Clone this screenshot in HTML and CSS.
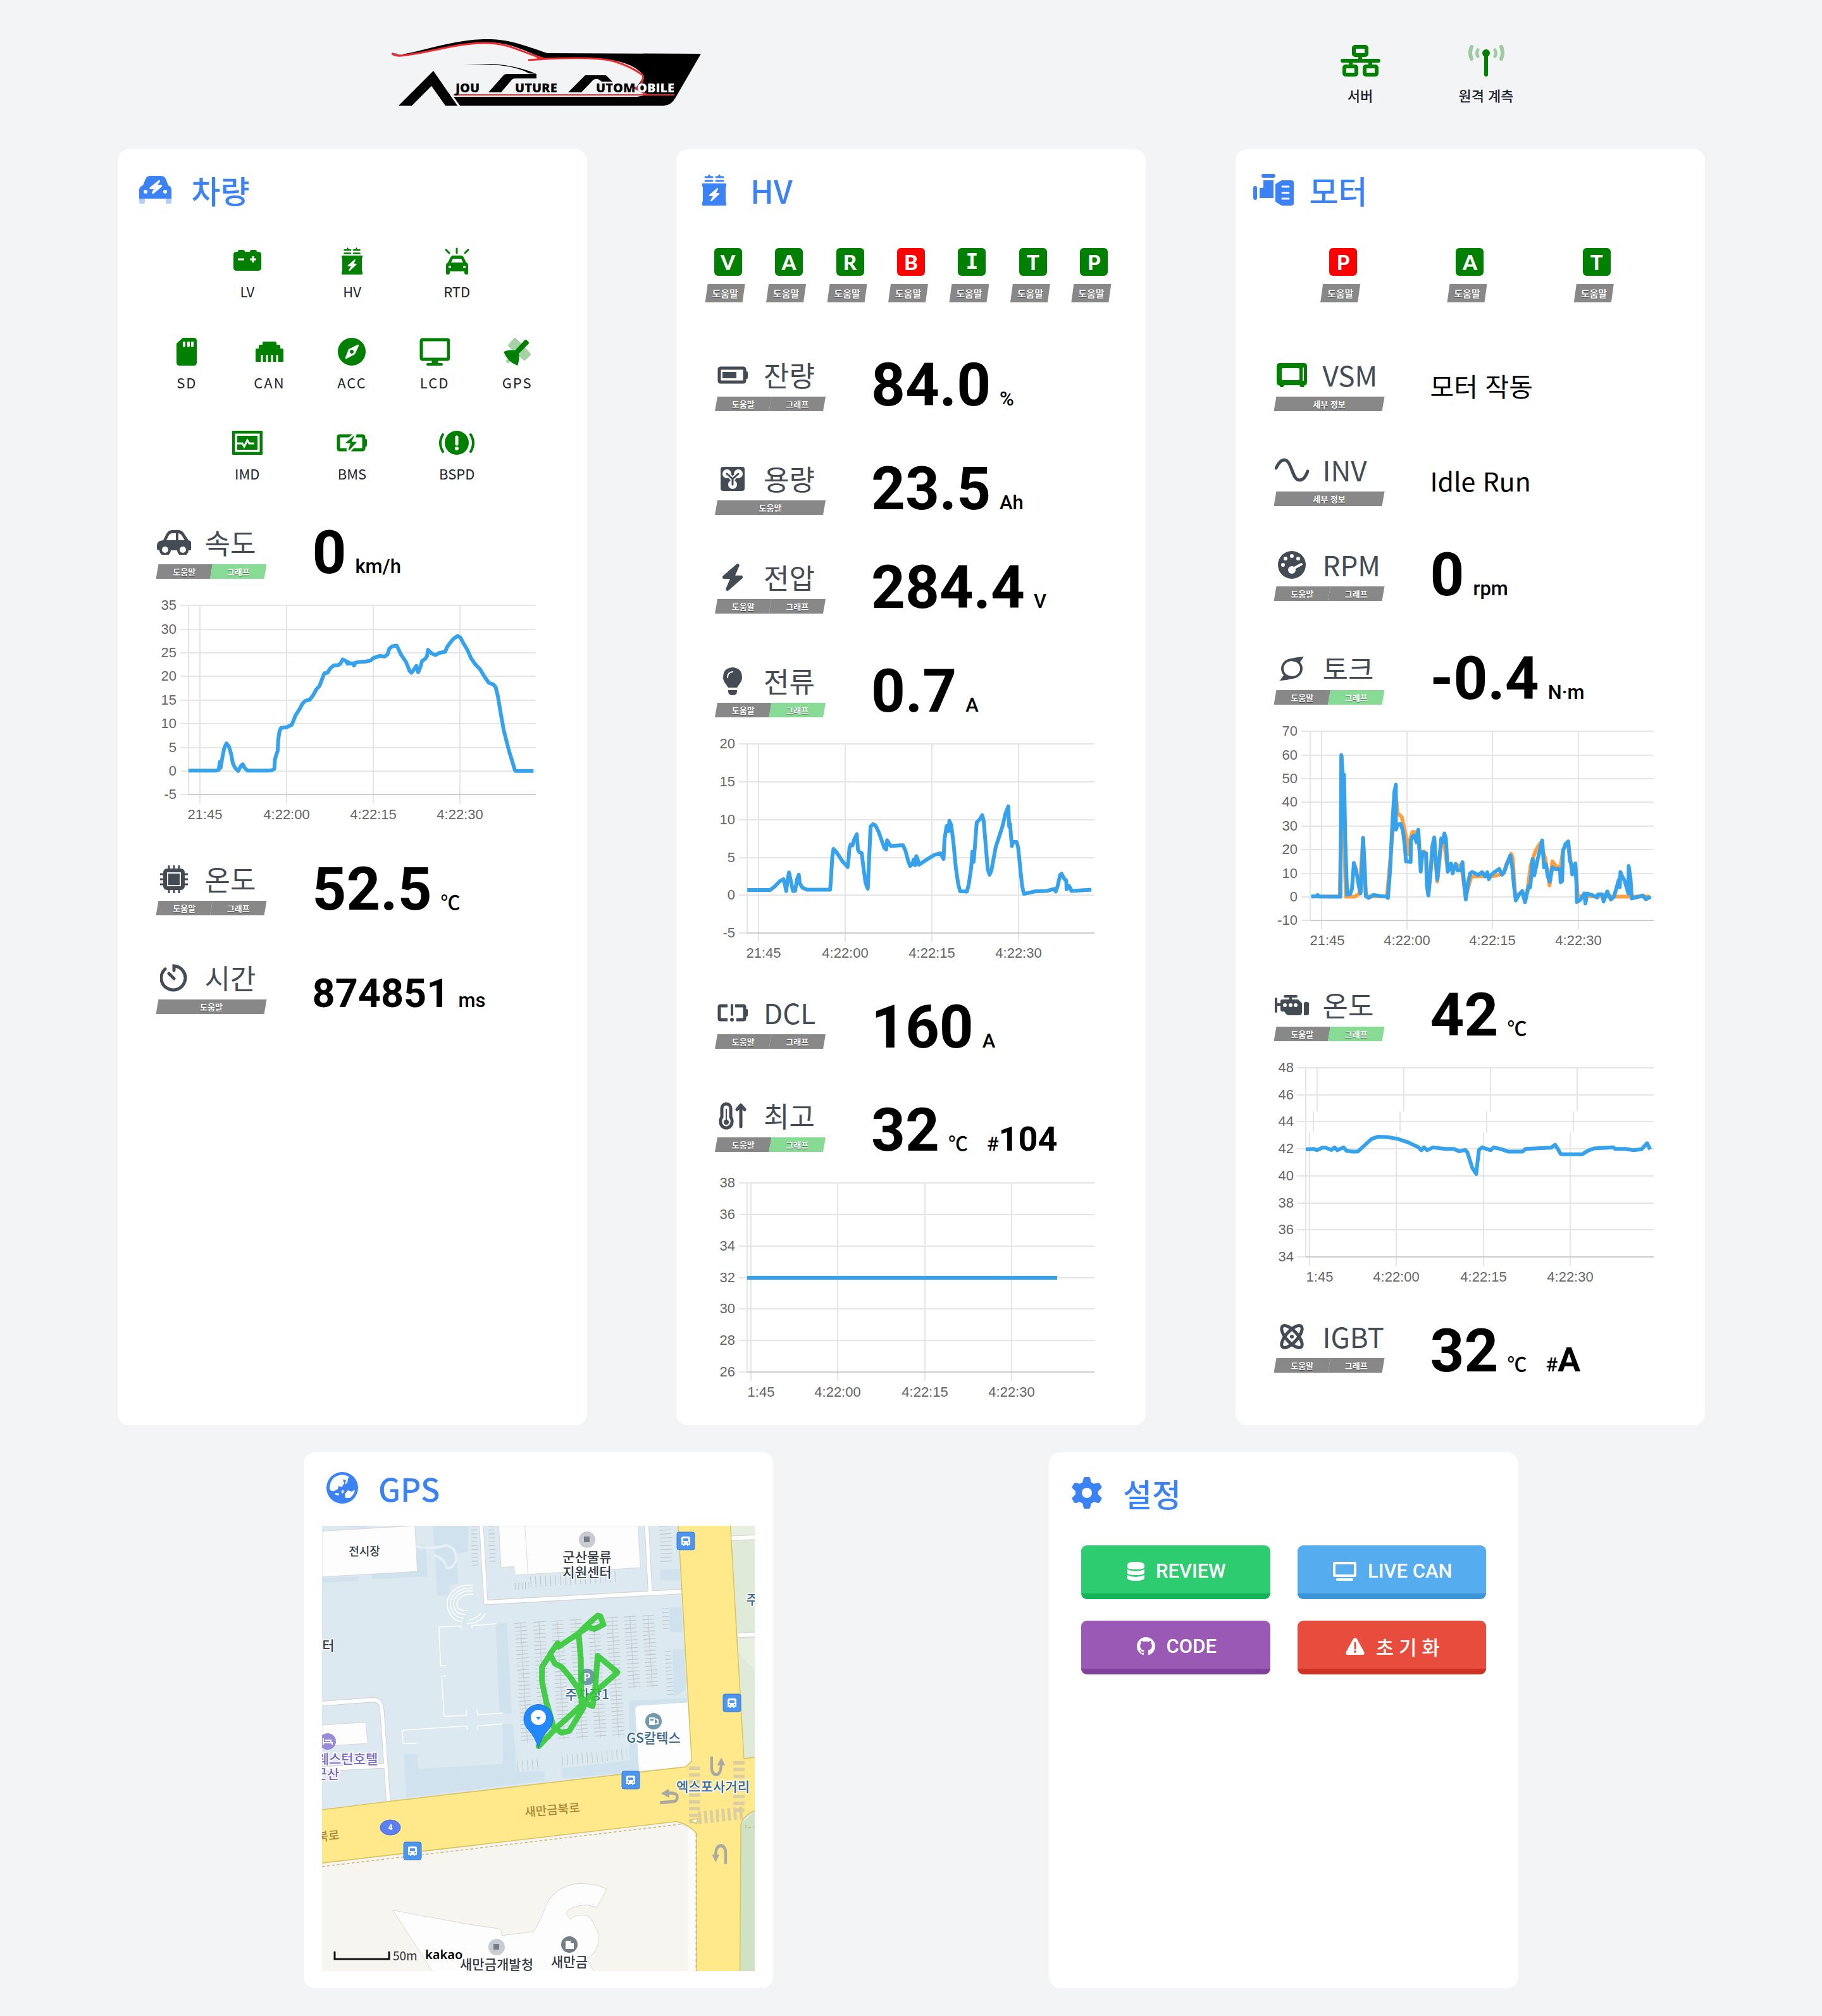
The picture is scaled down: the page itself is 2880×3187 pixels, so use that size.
FILE: index.html
```html
<!DOCTYPE html>
<html lang="ko">
<head>
<meta charset="utf-8">
<title>AFA Telemetry</title>
<meta name="viewport" content="width=device-width, initial-scale=1">
<link rel="stylesheet" href="styles.css">
</head>
<body>
<svg class="sprite" aria-hidden="true">
  <symbol id="i-hv" viewBox="0 0 38 50">
    <path d="M5 5h11M5 11h11M22 5h11M22 11h11" stroke="currentColor" stroke-width="3" stroke-linecap="round"/>
    <path d="M8 5l3-5 3 5zM24 5l3-5 3 5z" fill="currentColor"/>
    <path d="M1 15h36a1 1 0 0 1 1 1v4h-1v24h1v5a1 1 0 0 1-1 1H1a1 1 0 0 1-1-1v-5h1V20H0v-4a1 1 0 0 1 1-1z" fill="currentColor"/>
    <path d="M24 22L11 33q-1 2 1 2h5l-4 7q0 2 2 1l12-11q1-2-1-2h-4l3-6q0-3-1-2z" fill="#fff"/>
  </symbol>
  <symbol id="i-cell" viewBox="0 0 48 28">
    <path d="M44 8h2q2 0 2 2v8q0 2-2 2h-2z" fill="currentColor"/>
  </symbol>
</svg>

<header class="topbar">
  <svg class="logo" viewBox="0 0 490 106" role="img" aria-label="Ajou Future Automobile">
    <path d="M0 22C10 25 20 24 36 20C70 12 110 0 150 0C185 0 205 8 246 22L489 23L449 92Q442 105 430 105H108L98 91H388L404 88L385 78Q398 62 398 57Q380 33 320 30H240C200 14 185 5 150 5C110 6 70 18 30 25Z"/>
    <path d="M0 22Q6 27 15 26C60 22 100 6 148 6C185 6 200 18 240 31" fill="none" stroke="#ee2b2e" stroke-width="3"/>
    <path d="M216 33Q230 32 245 31C290 29 330 29 352 35Q378 43 396 56Q400 60 394 71Q392 76 384 77L404 88" fill="none" stroke="#ee2b2e" stroke-width="3"/>
    <path d="M224 24L246 31L232 32Z" fill="#ee2b2e"/>
    <path d="M98 88H447" stroke="#ee2b2e" stroke-width="2"/>
    <path d="M11 105L66 50L104 105H85L63 74L32 105Z"/>
    <path d="M114 39L150 39C182 39 212 47 229 55L217 54C202 45 180 41 150 40Z"/>
    <path d="M153 84L176 58Q178 55 182 55H229V62H195Q192 62 190 64L173 84Z"/>
    <path d="M279 84L306 57H339L349 67H332L328 64Q323 61 318 65L300 84Z"/>
    <g class="logo__text">
      <text x="101" y="84">JOU</text><text x="195" y="84">UTURE</text><text x="323" y="84">UTOM</text><text x="388" y="84" fill="#fff">OBILE</text>
    </g>
  </svg>
  <ul class="links">
    <li class="links__item">
      <svg width="63" height="50" viewBox="0 0 63 50" fill="none" stroke="currentColor" stroke-width="6"><rect x="21" y="3" width="20" height="13" rx="2"/><rect x="6" y="34" width="19" height="13" rx="2"/><rect x="38" y="34" width="19" height="13" rx="2"/><path d="M31 17v8M16 26v7M47 26v7"/><path d="M3 25h57" stroke-linecap="round"/></svg>
      <span class="status__label">서버</span>
    </li>
    <li class="links__item">
      <svg width="57" height="50" viewBox="0 0 57 50" fill="none" stroke="currentColor" stroke-linecap="round"><circle cx="28" cy="13" r="6" fill="currentColor" stroke="none"/><path d="M28 13v34" stroke-width="6"/><g opacity=".35"><path d="M5 3q-4 9 0 19M52 3q4 9 0 19" stroke-width="6"/><path d="M15 8q-3 5 0 10M42 8q3 5 0 10" stroke-width="5"/></g></svg>
      <span class="status__label">원격 계측</span>
    </li>
  </ul>
</header>

<main class="board">
  <section class="card">
    <h2 class="card__title">
      <span class="card__icon"><svg width="51" height="44" viewBox="0 0 51 44"><path fill="currentColor" d="M0 22Q0 17 6 15L10 5Q12 0 18 0H34Q40 0 42 5L46 15Q51 17 51 22V36H0Z"/><path fill="currentColor" opacity=".4" d="M0 36H9V42Q9 44 7 44H2Q0 44 0 42ZM42 36H51V42Q51 44 49 44H44Q42 44 42 42Z"/><circle cx="10" cy="25" r="3" fill="#fff"/><circle cx="41" cy="25" r="3" fill="#fff"/><path fill="#fff" d="M31 7L17 18Q15 21 18 21H23L20 26Q20 29 23 28L36 17Q37 14 34 14H29L33 9Q33 6 31 7Z"/></svg></span>
      차량
    </h2>
    <div class="statuses">
      <ul class="statuses__row statuses__row--three">
        <li class="status"><span class="status__icon"><svg width="44" height="34" viewBox="0 0 44 34"><path fill="currentColor" d="M7 3q0-3 3-3h5q3 0 3 3h8q0-3 3-3h5q3 0 3 3h2q5 0 5 5v20q0 5-5 5H5q-5 0-5-5V8q0-5 5-5z"/><path d="M7 15h10M26 15h10M31 10v10" stroke="#fff" stroke-width="3"/></svg></span><span class="status__label">LV</span></li>
        <li class="status"><span class="status__icon"><svg width="33" height="43"><use href="#i-hv"/></svg></span><span class="status__label">HV</span></li>
        <li class="status"><span class="status__icon"><svg width="39" height="43" viewBox="0 0 39 43"><path d="M2 4l5 5M19 2v7M37 4l-5 5" stroke="currentColor" stroke-width="3" stroke-linecap="round"/><path fill="currentColor" d="M2 29q0-4 3-5l4-8q1-3 5-3h11q4 0 5 3l4 8q3 1 3 5v11q0 3-2 3h-1q-3 0-3-3v-2H8v2q0 3-3 3H4q-2 0-2-3z"/><path fill="#fff" d="M10 24l3-6h13l3 6z"/><circle cx="8" cy="31" r="2" fill="#fff"/><circle cx="31" cy="31" r="2" fill="#fff"/></svg></span><span class="status__label">RTD</span></li>
      </ul>
      <ul class="statuses__row statuses__row--five">
        <li class="status"><span class="status__icon"><svg width="32" height="44" viewBox="0 0 32 44"><path fill="currentColor" d="M10 0H27q5 0 5 5V39q0 5-5 5H5q-5 0-5-5V9z"/><path d="M12 6v8M19 6v8M25 6v8" stroke="#fff" stroke-width="4"/></svg></span><span class="status__label">SD</span></li>
        <li class="status"><span class="status__icon"><svg width="44" height="32" viewBox="0 0 44 32"><path fill="currentColor" d="M0 31V13q0-2 2-2h3V7q0-2 2-2h4V2q0-2 2-2h18q2 0 2 2v3h4q2 0 2 2v4h3q2 0 2 2v18q0 1-1 1H1q-1 0-1-1z"/><path d="M10 21v11M18 21v11M26 21v11M34 21v11" stroke="#fff" stroke-width="3"/></svg></span><span class="status__label">CAN</span></li>
        <li class="status"><span class="status__icon"><svg width="44" height="44" viewBox="0 0 44 44"><circle cx="22" cy="22" r="22" fill="currentColor"/><path fill="#fff" d="M31 11q3-1 2 2l-6 13-13 7q-3 1-2-2l5-13z"/><circle cx="22" cy="22" r="3" fill="currentColor"/></svg></span><span class="status__label">ACC</span></li>
        <li class="status"><span class="status__icon"><svg width="48" height="44" viewBox="0 0 48 44" fill="none" stroke="currentColor"><rect x="3" y="3" width="43" height="31" rx="2" stroke-width="5"/><path d="M13 42h22" stroke-width="4" stroke-linecap="round"/><path d="M20 35h9l1 6H19z" fill="currentColor" stroke="none"/></svg></span><span class="status__label">LCD</span></li>
        <li class="status"><span class="status__icon"><svg width="44" height="44" viewBox="0 0 44 44"><g opacity=".35" fill="currentColor"><path d="M16 1q2-2 4 0l22 23q2 2 0 4l-7 7q-2 2-4 0L8 14q-2-2 0-4z"/><circle cx="7" cy="37" r="3"/></g><path fill="currentColor" d="M33 4q2-2 4 0l2 2q2 2 0 4L24 25q2 8-2 19Q6 38 0 22q9-4 18-2z"/></svg></span><span class="status__label">GPS</span></li>
      </ul>
      <ul class="statuses__row statuses__row--three">
        <li class="status"><span class="status__icon"><svg width="48" height="38" viewBox="0 0 48 38"><rect x="2" y="2" width="44" height="34" rx="1" fill="none" stroke="currentColor" stroke-width="5"/><path fill="currentColor" d="M8 8h32v22H8z"/><path d="M8 20h8l3 5 5-10 3 5h8" fill="none" stroke="#fff" stroke-width="3"/></svg></span><span class="status__label">IMD</span></li>
        <li class="status"><span class="status__icon"><svg width="48" height="28" viewBox="0 0 48 28"><rect x="3" y="3" width="40" height="22" rx="2" fill="none" stroke="currentColor" stroke-width="5"/><use href="#i-cell"/><path fill="currentColor" stroke="#fff" stroke-width="3" d="M28 0L13 13q-1 3 1 3h6l-3 9q1 3 4 2l12-13q1-3-1-3h-6l4-9q0-3-2-2z"/></svg></span><span class="status__label">BMS</span></li>
        <li class="status"><span class="status__icon"><svg width="56" height="38" viewBox="0 0 56 38"><circle cx="28" cy="19" r="19" fill="currentColor"/><path d="M28 10v11" stroke="#fff" stroke-width="5" stroke-linecap="round"/><circle cx="28" cy="28" r="3" fill="#fff"/><path d="M6 6q-8 13 0 27M50 6q8 13 0 27" fill="none" stroke="currentColor" stroke-width="4" stroke-linecap="round"/></svg></span><span class="status__label">BSPD</span></li>
      </ul>
    </div>

    <div class="metric metric--first">
      <div class="metric__side">
        <h3 class="metric__name"><span class="metric__icon"><svg width="54" height="39" viewBox="0 0 54 39"><path fill="currentColor" d="M0 25q0-6 5-8l5-1 5-10q3-6 9-6h10q5 0 8 4l8 12q5 1 5 7v6q0 3-3 3h-2a9 9 0 0 1-18 0H22a9 9 0 0 1-18 0q-4 0-4-3z"/><path fill="#fff" d="M19 8q2-3 5-3h6v11H15zM34 5q3 0 5 3l5 8H34z"/><circle cx="13" cy="31" r="5" fill="#fff"/><circle cx="41" cy="31" r="5" fill="#fff"/></svg></span>속도</h3>
        <div class="tabs"><button class="tab" type="button">도움말</button><button class="tab tab--on" type="button">그래프</button></div>
      </div>
      <p class="metric__value"><b class="num">0</b><span class="unit">km/h</span></p>
    </div>
    <svg class="chart" viewBox="61 0 620 367" role="img" aria-label="속도 그래프">
      <path class="grid" d="M99 22H661M99 60H661M99 97H661M99 134H661M99 172H661M99 209H661M99 247H661M99 284H661M99 321H661M112 22V321M130 22V335M267 22V335M404 22V335M541 22V335"/>
      <path class="grid" d="M112 321H661"/>
      <g class="ylab"><text x="93" y="29">35</text><text x="93" y="67">30</text><text x="93" y="104">25</text><text x="93" y="141">20</text><text x="93" y="179">15</text><text x="93" y="216">10</text><text x="93" y="254">5</text><text x="93" y="291">0</text><text x="93" y="328">-5</text></g>
      <g class="xlab"><text x="138" y="360">21:45</text><text x="267" y="360">4:22:00</text><text x="404" y="360">4:22:15</text><text x="541" y="360">4:22:30</text></g>
      <polyline class="line" transform="translate(-5 -5) scale(.4848 .4591)" points="241,628 330,628 340,625 343,598 346,618 352,580 358,550 365,534 373,545 380,570 386,603 393,618 403,629 412,612 418,606 424,618 434,628 500,628 512,627 521,622 523,590 527,575 532,560 534,520 538,492 543,481 562,478 578,470 590,438 605,413 613,397 623,387 636,384 648,368 658,348 668,337 676,315 684,293 694,291 704,275 716,265 728,265 736,260 744,245 756,252 760,260 762,254 765,259 776,258 781,266 786,256 797,254 820,252 834,249 845,240 865,233 880,235 890,228 896,208 905,200 920,197 934,228 950,253 962,284 968,291 976,280 984,267 990,289 996,275 1003,250 1014,242 1019,233 1022,212 1034,224 1046,230 1060,222 1078,219 1084,203 1094,188 1105,174 1119,164 1128,170 1138,190 1151,213 1162,240 1175,260 1192,279 1206,304 1220,325 1235,331 1243,341 1250,372 1260,435 1269,488 1285,555 1305,625 1308,629 1366,629"/>
    </svg>
    <div class="metric">
      <div class="metric__side">
        <h3 class="metric__name"><span class="metric__icon"><svg width="44" height="44" viewBox="0 0 44 44"><path d="M14 0v44M22 0v44M30 0v44M0 14h44M0 22h44M0 30h44" stroke="currentColor" stroke-width="3"/><rect x="5" y="5" width="34" height="34" rx="6" fill="currentColor"/><rect x="12" y="12" width="20" height="20" fill="none" stroke="#fff" stroke-width="2"/></svg></span>온도</h3>
        <div class="tabs"><button class="tab" type="button">도움말</button><button class="tab" type="button">그래프</button></div>
      </div>
      <p class="metric__value"><b class="num">52.5</b><span class="unit">℃</span></p>
    </div>
    <div class="metric">
      <div class="metric__side">
        <h3 class="metric__name"><span class="metric__icon"><svg width="44" height="44" viewBox="0 0 44 44" fill="none" stroke="currentColor" stroke-width="5" stroke-linecap="round"><path d="M8 8A19 19 0 1 0 22 3V10M14 15l8 8"/></svg></span>시간</h3>
        <div class="tabs"><button class="tab" type="button">도움말</button></div>
      </div>
      <p class="metric__value"><b class="num num--md">874851</b><span class="unit">ms</span></p>
    </div>
  </section>

  <section class="card">
    <h2 class="card__title"><span class="card__icon"><svg width="38" height="50"><use href="#i-hv"/></svg></span>HV</h2>
    <ul class="faults faults--seven">
      <li class="fault"><span class="fault__key">V</span><button class="tab tab--lg" type="button">도움말</button></li>
      <li class="fault"><span class="fault__key">A</span><button class="tab tab--lg" type="button">도움말</button></li>
      <li class="fault"><span class="fault__key">R</span><button class="tab tab--lg" type="button">도움말</button></li>
      <li class="fault"><span class="fault__key fault__key--bad">B</span><button class="tab tab--lg" type="button">도움말</button></li>
      <li class="fault"><span class="fault__key fault__key--serif">I</span><button class="tab tab--lg" type="button">도움말</button></li>
      <li class="fault"><span class="fault__key">T</span><button class="tab tab--lg" type="button">도움말</button></li>
      <li class="fault"><span class="fault__key">P</span><button class="tab tab--lg" type="button">도움말</button></li>
    </ul>

    <div class="metric metric--first">
      <div class="metric__side">
        <h3 class="metric__name"><span class="metric__icon"><svg width="48" height="28" viewBox="0 0 48 28"><rect x="3" y="3" width="40" height="22" rx="2" fill="none" stroke="currentColor" stroke-width="5"/><path fill="currentColor" d="M8 9h22v10H8z"/><use href="#i-cell"/></svg></span>잔량</h3>
        <div class="tabs"><button class="tab" type="button">도움말</button><button class="tab" type="button">그래프</button></div>
      </div>
      <p class="metric__value"><b class="num">84.0</b><span class="unit">%</span></p>
    </div>
    <div class="metric metric--loose">
      <div class="metric__side">
        <h3 class="metric__name"><span class="metric__icon"><svg width="38" height="38" viewBox="0 0 38 38"><rect width="38" height="38" rx="4" fill="currentColor"/><circle cx="10" cy="11" r="7" fill="#fff"/><circle cx="28" cy="11" r="7" fill="#fff"/><circle cx="19" cy="28" r="7" fill="#fff"/><path d="M10 11l9 8 9-8M19 19v9" fill="none" stroke="#fff" stroke-width="7"/><path d="M10 11l9 8 9-8M19 19v9" fill="none" stroke="currentColor" stroke-width="3" stroke-linecap="round"/></svg></span>용량</h3>
        <div class="tabs"><button class="tab" type="button">도움말</button></div>
      </div>
      <p class="metric__value"><b class="num">23.5</b><span class="unit">Ah</span></p>
    </div>
    <div class="metric">
      <div class="metric__side">
        <h3 class="metric__name"><span class="metric__icon"><svg width="38" height="43" viewBox="0 0 448 512"><path fill="currentColor" d="M349.4 44.6c5.9-13.7 1.5-29.7-10.6-38.5s-28.6-8-39.9 1.8l-256 224c-10 8.8-13.6 22.9-8.9 35.3S50.7 288 64 288H175.5L98.6 467.4c-5.9 13.7-1.5 29.7 10.6 38.5s28.6 8 39.9-1.8l256-224c10-8.8 13.6-22.9 8.9-35.3s-16.6-20.7-30-20.7H272.5L349.4 44.6z"/></svg></span>전압</h3>
        <div class="tabs"><button class="tab" type="button">도움말</button><button class="tab" type="button">그래프</button></div>
      </div>
      <p class="metric__value"><b class="num">284.4</b><span class="unit">V</span></p>
    </div>
    <div class="metric metric--loose">
      <div class="metric__side">
        <h3 class="metric__name"><span class="metric__icon"><svg width="30" height="44" viewBox="0 0 30 44"><path fill="currentColor" d="M15 0q15 1 15 16 0 5-4 10l-4 6H8l-4-6q-4-5-4-10Q0 1 15 0zM8 36h14v2q0 6-7 6t-7-6z"/><path d="M7 16q0-8 8-9" fill="none" stroke="#fff" stroke-width="2" stroke-linecap="round"/></svg></span>전류</h3>
        <div class="tabs"><button class="tab" type="button">도움말</button><button class="tab tab--on" type="button">그래프</button></div>
      </div>
      <p class="metric__value"><b class="num">0.7</b><span class="unit">A</span></p>
    </div>
    <svg class="chart" viewBox="61 0 620 367" role="img" aria-label="전류 그래프">
      <path class="grid" d="M99 22H661M99 82H661M99 142H661M99 202H661M99 261H661M99 321H661M112 22V321M130 22V335M267 22V335M404 22V335M541 22V335"/>
      <path class="grid" d="M112 321H661"/>
      <g class="ylab"><text x="93" y="29">20</text><text x="93" y="89">15</text><text x="93" y="149">10</text><text x="93" y="209">5</text><text x="93" y="268">0</text><text x="93" y="328">-5</text></g>
      <g class="xlab"><text x="138" y="360">21:45</text><text x="267" y="360">4:22:00</text><text x="404" y="360">4:22:15</text><text x="541" y="360">4:22:30</text></g>
      <polyline class="line" transform="translate(-9 -223) scale(.4848 .4082)" points="250,1166 325,1166 340,1152 355,1133 368,1124 372,1140 377,1170 381,1130 386,1098 391,1125 399,1170 406,1170 412,1125 418,1107 421,1140 430,1157 445,1165 520,1165 523,1120 527,1040 531,1007 540,1018 560,1054 577,1077 580,1050 583,1005 587,990 593,993 598,972 607,950 611,1010 615,1019 623,1023 630,1090 636,1140 643,1161 646,1080 652,920 660,911 668,916 678,940 690,980 697,1003 703,1009 706,973 712,985 718,996 750,993 758,993 766,1015 775,1055 781,1073 788,1065 793,1048 797,1070 801,1035 805,1045 810,1068 830,1052 860,1030 880,1024 890,1046 893,970 900,918 906,938 909,898 915,915 922,980 930,1080 938,1145 944,1171 966,1172 972,1145 980,1080 984,1018 988,1057 992,1000 998,905 1010,890 1016,876 1021,900 1028,1000 1034,1085 1040,1107 1046,1090 1060,1000 1082,920 1092,870 1101,842 1104,920 1107,910 1110,960 1113,996 1115,980 1128,980 1133,1000 1140,1080 1146,1150 1152,1181 1190,1171 1225,1170 1250,1162 1256,1172 1262,1150 1270,1108 1275,1103 1283,1122 1290,1130 1291,1163 1299,1150 1303,1158 1307,1170 1372,1165"/>
    </svg>
    <div class="metric metric--low">
      <div class="metric__side">
        <h3 class="metric__name"><span class="metric__icon"><svg width="48" height="28" viewBox="0 0 48 28"><path d="M16 3H5q-2 0-2 2v18q0 2 2 2H16M28 3H41q2 0 2 2v18q0 2-2 2H30" fill="none" stroke="currentColor" stroke-width="5"/><path d="M23 2v15" stroke="currentColor" stroke-width="4" stroke-linecap="round"/><circle cx="23" cy="25" r="3" fill="currentColor"/><use href="#i-cell"/></svg></span>DCL</h3>
        <div class="tabs"><button class="tab" type="button">도움말</button><button class="tab" type="button">그래프</button></div>
      </div>
      <p class="metric__value"><b class="num">160</b><span class="unit">A</span></p>
    </div>
    <div class="metric metric--low">
      <div class="metric__side">
        <h3 class="metric__name"><span class="metric__icon"><svg width="44" height="44" viewBox="0 0 44 44"><path d="M5 10a7 7 0 0 1 14 0V24q3 4 2 8a9 9 0 0 1-18 0q-1-4 2-8z" fill="none" stroke="currentColor" stroke-width="5"/><path d="M12 11v20" stroke="currentColor" stroke-width="2"/><circle cx="12" cy="32" r="4" fill="currentColor"/><path d="M35 39V8M29 12l6-7 6 7" fill="none" stroke="currentColor" stroke-width="5" stroke-linecap="round" stroke-linejoin="round"/></svg></span>최고</h3>
        <div class="tabs"><button class="tab" type="button">도움말</button><button class="tab tab--on" type="button">그래프</button></div>
      </div>
      <p class="metric__value"><b class="num">32</b><span class="unit">℃</span><span class="unit unit--ref">#<b class="num num--sm">104</b></span></p>
    </div>
    <svg class="chart" viewBox="61 0 620 367" role="img" aria-label="최고 온도 그래프">
      <path class="grid" d="M99 22H661M99 72H661M99 122H661M99 172H661M99 221H661M99 271H661M99 321H661M112 22V321M118 22V335M255 22V335M393 22V335M530 22V335"/>
      <path class="grid" d="M112 321H661"/>
      <g class="ylab"><text x="93" y="29">38</text><text x="93" y="79">36</text><text x="93" y="129">34</text><text x="93" y="179">32</text><text x="93" y="228">30</text><text x="93" y="278">28</text><text x="93" y="328">26</text></g>
      <g class="xlab"><text x="134" y="360">1:45</text><text x="255" y="360">4:22:00</text><text x="393" y="360">4:22:15</text><text x="530" y="360">4:22:30</text></g>
      <polyline class="line" points="112,172 602,172"/>
    </svg>
  </section>

  <section class="card">
    <h2 class="card__title"><span class="card__icon"><svg width="64" height="50" viewBox="0 0 64 50"><g fill="currentColor"><rect x="13" width="22" height="6" rx="3"/><rect y="19" width="6" height="22" rx="3"/><path d="M10 22h6V10h16v28H10zM35 16l10-6h15q4 0 4 4v32q0 4-4 4H45l-10-6z"/></g><path d="M46 20h10M46 30h10M46 39h10" stroke="#fff" stroke-width="3" stroke-linecap="round"/></svg></span>모터</h2>
    <ul class="faults faults--three">
      <li class="fault"><span class="fault__key fault__key--bad">P</span><button class="tab tab--lg" type="button">도움말</button></li>
      <li class="fault"><span class="fault__key">A</span><button class="tab tab--lg" type="button">도움말</button></li>
      <li class="fault"><span class="fault__key">T</span><button class="tab tab--lg" type="button">도움말</button></li>
    </ul>

    <div class="metric metric--first">
      <div class="metric__side">
        <h3 class="metric__name"><span class="metric__icon metric__icon--ok"><svg width="48" height="38" viewBox="0 0 48 38"><path fill="currentColor" d="M5 0h38q5 0 5 5v25q0 5-4 5l-1 3h-5l-2-3H12l-2 3H6l-2-3q-4 0-4-5V5q0-5 5-5z"/><rect x="8" y="8" width="28" height="19" rx="2" fill="#fff"/><path d="M42 7v21" stroke="#fff" stroke-width="2"/></svg></span>VSM</h3>
        <div class="tabs"><button class="tab" type="button">세부 정보</button></div>
      </div>
      <p class="metric__value metric__value--text">모터 작동</p>
    </div>
    <div class="metric metric--tight">
      <div class="metric__side">
        <h3 class="metric__name"><span class="metric__icon"><svg width="54" height="38" viewBox="0 0 54 38"><path d="M2 16Q8 3 15 3C27 3 27 35 39 35Q47 35 52 21" fill="none" stroke="currentColor" stroke-width="5" stroke-linecap="round"/></svg></span>INV</h3>
        <div class="tabs"><button class="tab" type="button">세부 정보</button></div>
      </div>
      <p class="metric__value metric__value--text">Idle Run</p>
    </div>
    <div class="metric metric--tight">
      <div class="metric__side">
        <h3 class="metric__name"><span class="metric__icon"><svg width="44" height="44" viewBox="0 0 44 44"><circle cx="22" cy="22" r="22" fill="currentColor"/><g fill="#fff"><circle cx="8" cy="22" r="3"/><circle cx="12" cy="12" r="3"/><circle cx="22" cy="8" r="3"/><circle cx="32" cy="12" r="3"/><circle cx="22" cy="30" r="6"/></g><path d="M22 29l15-8" stroke="#fff" stroke-width="4" stroke-linecap="round"/></svg></span>RPM</h3>
        <div class="tabs"><button class="tab" type="button">도움말</button><button class="tab" type="button">그래프</button></div>
      </div>
      <p class="metric__value"><b class="num">0</b><span class="unit">rpm</span></p>
    </div>
    <div class="metric metric--loose">
      <div class="metric__side">
        <h3 class="metric__name"><span class="metric__icon"><svg width="38" height="38" viewBox="0 0 38 38"><ellipse cx="19" cy="19" rx="15" ry="14" fill="none" stroke="currentColor" stroke-width="4"/><path fill="currentColor" d="M12 5Q22 1 38 0L31 10ZM26 33Q16 37 0 38L7 28Z"/></svg></span>토크</h3>
        <div class="tabs"><button class="tab" type="button">도움말</button><button class="tab tab--on" type="button">그래프</button></div>
      </div>
      <p class="metric__value"><b class="num">-0.4</b><span class="unit">N·m</span></p>
    </div>
    <svg class="chart" viewBox="61 0 620 367" role="img" aria-label="토크 그래프">
      <path class="grid" d="M104 22H661M104 60H661M104 97H661M104 134H661M104 172H661M104 209H661M104 247H661M104 284H661M104 321H661M118 22V321M136 22V335M271 22V335M406 22V335M542 22V335"/>
      <path class="grid" d="M118 321H661"/>
      <g class="ylab"><text x="98" y="29">70</text><text x="98" y="67">60</text><text x="98" y="104">50</text><text x="98" y="141">40</text><text x="98" y="179">30</text><text x="98" y="216">20</text><text x="98" y="254">10</text><text x="98" y="291">0</text><text x="98" y="328">-10</text></g>
      <g class="xlab"><text x="145" y="360">21:45</text><text x="271" y="360">4:22:00</text><text x="406" y="360">4:22:15</text><text x="542" y="360">4:22:30</text></g>
      <g transform="translate(-3 -113) scale(.4848 .3954)">
        <polyline class="line line--alt" points="253,1002 346,1002 350,700 352,440 366,1003 395,1003 410,990 422,768 431,1001 500,1002 529,600 535,670 548,684 560,750 570,832 576,770 583,744 598,745 610,850 620,822 628,830 634,995 654,770 664,942 677,790 687,790 698,900 730,878 742,878 757,1000 775,922 850,920 880,910 890,870 905,832 910,850 918,1000 941,985 950,1020 960,960 968,880 984,820 1000,788 1016,850 1030,958 1039,862 1050,880 1066,886 1074,815 1090,785 1104,905 1114,875 1122,1000 1240,1003 1355,1002"/>
        <polyline class="line" points="253,1002 270,1001 274,996 278,1002 348,1003 350,700 351,437 356,520 358,725 360,515 364,780 370,995 380,992 386,970 392,868 400,900 408,960 414,990 418,900 422,768 427,880 431,1000 440,1008 456,996 480,1001 500,1002 503,1008 510,900 518,700 524,585 529,555 529,735 535,715 545,712 552,740 558,800 562,862 577,864 578,780 583,762 590,758 596,785 602,735 606,820 610,902 616,825 627,830 630,960 635,998 641,920 648,800 654,766 659,860 664,935 670,860 677,770 682,785 687,750 692,770 698,903 704,880 709,870 714,910 719,885 724,872 730,898 740,898 746,865 752,960 757,1014 764,950 771,910 778,904 797,916 810,905 820,922 827,905 832,933 838,918 850,905 866,892 875,915 882,905 892,870 902,838 908,880 914,960 920,1018 930,995 941,980 950,1025 962,960 967,965 975,852 980,918 990,860 1006,778 1012,885 1018,873 1024,920 1031,943 1039,886 1050,893 1064,893 1066,945 1071,940 1074,820 1082,792 1091,782 1096,858 1100,870 1104,914 1114,870 1118,960 1119,1024 1130,1016 1143,990 1147,1030 1152,990 1168,996 1185,1006 1188,994 1202,993 1206,1022 1218,982 1230,1014 1240,1003 1250,960 1256,935 1259,965 1261,904 1266,920 1275,940 1287,990 1288,880 1294,930 1298,1010 1316,1004 1334,998 1344,1013 1360,1003"/>
      </g>
    </svg>
    <div class="metric">
      <div class="metric__side">
        <h3 class="metric__name"><span class="metric__icon"><svg width="54" height="32" viewBox="0 0 54 32"><path d="M2 6v20M2 15h8M16 2h18M25 2v6" stroke="currentColor" stroke-width="4" stroke-linecap="round"/><path fill="currentColor" d="M12 7h25l6 6v14q0 5-5 5H22q-3 0-5-3l-2-3H12q-3 0-3-3V10q0-3 3-3zM49 11h2q3 0 3 3v15q0 3-3 3h-5V14q0-3 3-3z"/><g fill="#fff"><circle cx="16" cy="16" r="3"/><circle cx="25" cy="16" r="3"/><circle cx="33" cy="16" r="3"/></g></svg></span>온도</h3>
        <div class="tabs"><button class="tab" type="button">도움말</button><button class="tab tab--on" type="button">그래프</button></div>
      </div>
      <p class="metric__value"><b class="num">42</b><span class="unit">℃</span></p>
    </div>
    <svg class="chart" viewBox="61 0 620 367" role="img" aria-label="모터 온도 그래프">
      <path class="grid" d="M97 22H661M97 65H661M97 107H661M97 150H661M97 193H661M97 236H661M97 278H661M97 321H661M111 22V321M129 22V91M266 22V91M403 22V91M540 22V91M123 91V124M260 91V124M397 91V124M534 91V124M117 124V335M254 124V335M392 124V335M529 124V335"/>
      <path class="grid" d="M111 321H661"/>
      <g class="ylab"><text x="92" y="29">48</text><text x="92" y="72">46</text><text x="92" y="114">44</text><text x="92" y="157">42</text><text x="92" y="200">40</text><text x="92" y="243">38</text><text x="92" y="285">36</text><text x="92" y="328">34</text></g>
      <g class="xlab"><text x="133" y="360">1:45</text><text x="254" y="360">4:22:00</text><text x="392" y="360">4:22:15</text><text x="529" y="360">4:22:30</text></g>
      <polyline class="line" transform="translate(-3 -24) scale(.4848 .4082)" points="235,429 262,427 271,432 290,422 300,422 319,431 329,421 338,432 358,421 368,434 385,437 405,437 425,415 450,388 470,380 500,381 535,388 570,402 602,420 612,432 621,421 631,432 650,421 690,427 718,427 735,436 755,431 762,440 778,500 791,524 795,480 800,430 810,421 838,432 848,421 870,427 895,437 942,437 952,427 1035,422 1048,411 1056,425 1066,446 1074,448 1136,448 1155,434 1175,425 1238,421 1244,427 1278,427 1304,432 1330,428 1348,405 1358,429"/>
    </svg>
    <div class="metric metric--low">
      <div class="metric__side">
        <h3 class="metric__name"><span class="metric__icon"><svg width="40" height="40" viewBox="0 0 40 40" fill="none" stroke="currentColor" stroke-width="5"><ellipse cx="20" cy="20" rx="22" ry="9" transform="rotate(48 20 20)"/><ellipse cx="20" cy="20" rx="22" ry="9" transform="rotate(-48 20 20)"/><circle cx="20" cy="20" r="3" fill="currentColor" stroke="none"/></svg></span>IGBT</h3>
        <div class="tabs"><button class="tab" type="button">도움말</button><button class="tab" type="button">그래프</button></div>
      </div>
      <p class="metric__value"><b class="num">32</b><span class="unit">℃</span><span class="unit unit--ref">#<b class="num num--sm">A</b></span></p>
    </div>
  </section>

  <section class="card card--map">
    <h2 class="card__title"><span class="card__icon"><svg width="50" height="50" viewBox="0 0 50 50"><circle cx="25" cy="25" r="25" fill="currentColor"/><path fill="#fff" d="M5 26Q5 15 12 9Q20 3 30 5L36 8L32 13L26 12L28 18L24 24L19 22L18 27L12 30Q6 31 5 26ZM29 35L34 29L40 31L45 28Q44 36 37 41L30 41ZM14 33l6 1v3l-6-1zM24 29l3-1v5l-3 1zM31 13l3-2-1 6-4 3z"/></svg></span>GPS</h2>
    <svg class="map" viewBox="0 0 684 704" role="img" aria-label="지도">
      <defs>
        <symbol id="m-bus" viewBox="0 0 30 30"><rect x="1" y="1" width="28" height="28" rx="3" fill="#4b94ef" stroke="#3a7fd6"/><path fill="#fff" d="M8 11q0-3 3-3h8q3 0 3 3v10h-3v2h-2v-2h-4v2h-2v-2H8z"/><path fill="#4b94ef" d="M11 11h8v4h-8zM10 17h2v2h-2zM18 17h2v2h-2z"/></symbol>
      </defs>
      <rect width="684" height="704" fill="#dce9f1"/>
      <g transform="scale(.4911 .5612) translate(-79 -237)">
        <path fill="#d0e2ee" d="M436 237H548L550 310L512 315L517 400L487 405V433H450L443 330ZM384 290H412L420 380L240 388V370L384 365ZM79 384L195 380V392L79 398ZM637 512H674L690 765H650ZM343 880H384L388 922L660 908V795H694L706 930L795 928V955L350 1003ZM850 920L1096 895L1100 930L850 948ZM1068 730L1253 722L1255 735L1090 745L1098 925L1068 905ZM1196 467H1237L1240 537H1198ZM1208 585H1245L1250 700L1210 720ZM1168 360L1230 358L1233 390H1170ZM132 237H229L215 244Z"/>
        <path fill="#f6f5f0" d="M79 1187L1220 1070L1285 1105V1495H79Z"/>
        <path fill="#fbfbfb" d="M1257 1085L1285 1105V1495H1257Z"/>
        <path fill="#dfead9" d="M1393 237H1474V890L1437 895Z"/>
        <path fill="#e7efe1" d="M1393 237H1474V268L1396 272ZM1418 590Q1450 630 1474 640V555H1416Z"/>
        <path fill="#cfe2c3" d="M1424 1080L1474 1040V1495H1424Z"/>
        <g fill="none" stroke-linejoin="round">
          <path d="M592 237L606 453L1240 422M1124 237L1135 422M79 738L245 727Q268 727 272 755L293 1020M79 922L285 913M1396 272L1476 269M1416 545L1476 543" stroke="#d3d3d3" stroke-width="15"/>
          <path d="M592 237L606 453L1240 422M1124 237L1135 422M79 738L245 727Q268 727 272 755L293 1020M79 922L285 913M1396 272L1476 269M1416 545L1476 543" stroke="#fff" stroke-width="11"/>
          <path d="M478 631H461L455 522L527 519V529M561 527L562 518L641 513M480 659L464 661L472 774L544 771V757M577 755L580 769L660 765M383 850H339L338 813L545 801L548 811M580 811V801L660 795" stroke="#fdfdfd" stroke-width="3"/>
          <path d="M565 405C510 400 480 430 482 460C485 490 510 508 530 506M565 413C520 408 490 435 492 460C494 482 512 497 535 497M565 421C528 416 500 438 502 460C504 476 518 488 540 486M565 430C535 427 512 442 513 460C515 470 525 477 545 475M545 512Q585 515 605 484M552 502Q575 500 590 484" stroke="#fff" stroke-width="3"/>
          <path d="M384 295Q430 305 480 292Q515 300 510 335Q500 360 480 355Q475 330 440 320" stroke="#e6eff5" stroke-width="8"/>
        </g>
        <path fill="#fdfdfe" stroke="#d5d8da" stroke-width="2" d="M79 252L378 237L386 366L79 381ZM648 237L655 354L696 352L700 376L1104 355L1096 237ZM79 798L220 790L226 850L79 858Z"/>
        <path d="M732 237L742 373" stroke="#d5d8da" stroke-width="2"/>
        <path fill="#fdfdfe" d="M1087 757Q1087 745 1100 744L1256 735L1269 895L1250 916L1100 927Z"/>
        <g fill="none" stroke="#c0c5c8" stroke-width="38" stroke-dasharray="2 9">
          <path d="M718 510L740 848M777 507L799 845M836 504L858 842M895 501L917 838M953 498L975 835M1012 495L1034 832M1070 492L1084 696M1128 489L1142 692M1183 237L1188 343"/>
          <path stroke-width="20" d="M1184 470L1186 528M1192 590L1200 715M568 237L572 352M624 237L628 342M700 408L745 406"/>
          <path stroke-width="30" stroke-dasharray="2 14" d="M750 395L1034 380M708 915L785 907M852 898L1060 880"/>
        </g>
        <path d="M718 510L740 848M777 507L799 845M836 504L858 842M895 501L917 838M953 498L975 835M1012 495L1034 832M1070 492L1084 696M1128 489L1142 692" stroke="#c6cacc" stroke-width="2"/>
        <path fill="#ffe98a" stroke="#d8c45c" stroke-width="3" d="M1225 230H1393L1437 893L1480 888V1036Q1430 1055 1427 1080L1424 1500H1285V1105Q1265 1080 1220 1070L70 1188V1038L300 1013L1250 916L1269 900Z"/>
        <path d="M79 1197L1240 1077M1283 1105V1495M1443 1080V1088L1472 1086" fill="none" stroke="#cfb98a" stroke-width="3" stroke-dasharray="9 7"/>
        <path fill="none" stroke="#dccf9f" stroke-width="36" stroke-dasharray="10 9" d="M1278 915V1075M1421 900V1045M1290 1060L1440 1045"/>
        <path fill="#fff" stroke="#d8c45c" stroke-width="3" d="M1264 1066L1287 1062L1285 1077Z"/>
        <path fill="#fdfdfd" stroke="#dcdcda" stroke-width="2" d="M307 1320L540 1358L655 1373L658 1391L758 1381Q775 1365 802 1303Q830 1250 912 1244L962 1248L995 1260L964 1312L932 1305Q875 1308 865 1328L878 1345Q900 1330 935 1336Q950 1345 970 1390Q972 1440 930 1455L960 1500H440Z"/>
        <g fill="none" stroke="#a9a9a4" stroke-width="9"><path d="M1333 887V920Q1334 938 1350 938Q1364 936 1364 905M1167 1017L1210 1014Q1224 1012 1222 998Q1220 988 1190 990M1378 1190V1155Q1376 1138 1361 1138Q1346 1140 1346 1165"/></g>
        <path fill="#a9a9a4" d="M1351 912L1364 890L1377 912ZM1195 978L1170 991L1197 1003ZM1334 1163H1358L1346 1185Z"/>
      </g>
      <use href="#m-bus" x="560" y="9" width="30" height="30"/><use href="#m-bus" x="633" y="265" width="30" height="30"/><use href="#m-bus" x="473" y="387" width="30" height="30"/><use href="#m-bus" x="128" y="499" width="30" height="30"/>
      <g fill="#c8cbcf"><circle cx="419" cy="22" r="13"/><circle cx="276" cy="666" r="13"/></g>
      <path fill="#747e86" d="M414 17h9v9h-9zM271 661h9v9h-9z"/>
      <circle cx="391" cy="662" r="13" fill="#747e86"/><path fill="#fff" d="M385 656h8v4h5v9h-13z"/>
      <circle cx="524" cy="309" r="13" fill="#7199ad"/><path fill="#fff" d="M517 303h9v12h-9z"/><path fill="#7199ad" d="M519 305h5v3h-5z"/><path d="M527 305l4 2v6h-4" fill="none" stroke="#fff" stroke-width="2"/>
      <circle cx="419" cy="239" r="13" fill="#7199ad"/><text class="map__p" x="419" y="245">P</text>
      <circle cx="9" cy="341" r="13" fill="#9a8bd8"/><path d="M2 336v10M2 343h14v3M5 339h9v3" fill="none" stroke="#fff" stroke-width="2"/>
      <ellipse cx="108" cy="477" rx="16" ry="12" fill="#5b7ff5" stroke="#4a6ad6"/><text class="map__p map__p--sm" x="108" y="481">4</text>
      <g class="map__text">
        <text x="67" y="47" font-size="18">전시장</text>
        <text x="419" y="57">군산물류</text><text x="419" y="81">지원센터</text>
        <text x="10" y="197">터</text>
        <g fill="#35688c"><text x="680" y="124">주</text><text x="524" y="343">GS칼텍스</text><text x="419" y="274">주차장1</text><text x="618" y="420">엑스포사거리</text></g>
        <g fill="#7a68c4"><text x="40" y="376">웨스턴호텔</text><text x="8" y="400">군산</text></g>
        <g fill="#a8873c" class="map__road"><text x="364" y="456" transform="rotate(-5 364 449)">새만금북로</text><text x="10" y="497" transform="rotate(-5 10 490)">북로</text></g>
        <text x="276" y="701">새만금개발청</text><text x="391" y="697">새만금</text>
      </g>
      <g transform="scale(.4911 .5612) translate(-79 -237)">
        <path class="track" d="M776 858L835 805L905 750L945 715L1030 650L966 603L958 700L950 745L918 735L903 695L875 660L850 635L828 625L813 598L838 568L840 578L905 540L925 522L966 490L975 492L985 515L955 528L935 522L905 540L912 610L914 735L920 750L875 815L850 820L825 805L800 730L787 675V635L813 600"/>
      </g>
      <path fill="#2389fb" stroke="#1b74dd" d="M342 352Q338 335 325 321A23 23 0 1 1 359 321Q346 335 342 352Z"/>
      <circle cx="342" cy="303" r="12" fill="#fff"/><path fill="#2389fb" d="M338 302h8l-4 5z"/>
      <path d="M20 673v12h86v-12" fill="none" stroke="#111" stroke-width="3"/>
      <text class="map__scale" x="112" y="687">50m</text>
      <text class="map__brand" x="163" y="685">kakao</text>
    </svg>
  </section>

  <section class="card">
    <h2 class="card__title"><span class="card__icon"><svg width="50" height="50" viewBox="-25 -25 50 50"><g fill="currentColor"><circle r="18"/><g id="tooth"><path d="M-8-12L-5-24Q-4-25-3-25H3Q4-25 5-24L8-12ZM-8 12L-5 24Q-4 25-3 25H3Q4 25 5 24L8 12Z"/></g><use href="#tooth" transform="rotate(60)"/><use href="#tooth" transform="rotate(120)"/></g><circle r="8" fill="#fff"/></svg></span>설정</h2>
    <div class="actions">
      <button class="action action--green" type="button"><svg width="27" height="30" viewBox="0 0 27 30"><path fill="#fff" d="M0 5Q0 0 13 0T27 5V8Q27 12 13 12T0 8ZM0 12Q6 15 13 15T27 12V17Q27 21 13 21T0 17ZM0 21Q6 24 13 24T27 21V25Q27 30 13 30T0 25Z"/></svg>REVIEW</button>
      <button class="action action--blue" type="button"><svg width="37" height="30" viewBox="0 0 37 30"><rect x="2" y="2" width="33" height="20" rx="1" fill="none" stroke="#fff" stroke-width="4"/><path d="M7 28h23" stroke="#fff" stroke-width="4" stroke-linecap="round"/></svg>LIVE CAN</button>
      <button class="action action--purple" type="button"><svg width="29" height="29" viewBox="0 0 16 16"><path fill="#fff" d="M8 0C3.58 0 0 3.58 0 8c0 3.54 2.29 6.53 5.47 7.59.4.07.55-.17.55-.38 0-.19-.01-.82-.01-1.49-2.01.37-2.53-.49-2.69-.94-.09-.23-.48-.94-.82-1.13-.28-.15-.68-.52-.01-.53.63-.01 1.08.58 1.23.82.72 1.21 1.87.87 2.33.66.07-.52.28-.87.51-1.07-1.78-.2-3.64-.89-3.64-3.95 0-.87.31-1.59.82-2.15-.08-.2-.36-1.02.08-2.12 0 0 .67-.21 2.2.82.64-.18 1.32-.27 2-.27.68 0 1.36.09 2 .27 1.53-1.04 2.2-.82 2.2-.82.44 1.1.16 1.92.08 2.12.51.56.82 1.27.82 2.15 0 3.07-1.87 3.75-3.65 3.95.29.25.54.73.54 1.48 0 1.07-.01 1.93-.01 2.2 0 .21.15.46.55.38A8.013 8.013 0 0016 8c0-4.42-3.58-8-8-8z"/></svg>CODE</button>
      <button class="action action--red" type="button"><svg width="30" height="27" viewBox="0 0 30 27"><path fill="#fff" d="M12 2Q15-2 18 2L29 22Q31 27 27 27H3Q-1 27 1 22Z"/><path d="M15 8v9" stroke="#e74c3c" stroke-width="3" stroke-linecap="round"/><circle cx="15" cy="22" r="2" fill="#e74c3c"/></svg>초 기 화</button>
    </div>
  </section>
</main>
</body>
</html>
```
FILE: styles.css
```css
* { box-sizing: border-box; }

body {
  margin: 0;
  background: #f3f4f6;
  color: #000;
  font-family: "Noto Sans CJK KR", sans-serif;
}

h2, h3, p, ul { margin: 0; padding: 0; }
ul { list-style: none; }
button { border: 0; padding: 0; font-family: inherit; color: #fff; cursor: pointer; }
svg { display: block; flex: none; }
.sprite { position: absolute; width: 0; height: 0; }

/* header */
.topbar {
  display: flex;
  justify-content: space-between;
  align-items: center;
  padding: 62px 16.7% 68px 21.5%;
}
.logo { width: 490px; height: 106px; }
.logo__text { font: 800 20px "Open Sans", sans-serif; }
.links { display: flex; gap: 99px; }
.links__item {
  display: flex;
  flex-direction: column;
  align-items: center;
  gap: 13px;
  width: 100px;
  padding-top: 6px;
  color: green;
}
.links__item .status__label { font-weight: 500; }

/* board */
.board {
  display: flex;
  flex-wrap: wrap;
  justify-content: space-evenly;
  gap: 43px 0;
  padding: 0 44px 43px;
}
.card {
  width: 26.576%;
  padding: 34px 0 38px;
  border-radius: 18px;
  background: #fff;
}
.card--map { padding: 26px 29px 27px; }
.card__title {
  display: flex;
  align-items: center;
  gap: 25px;
  padding-left: 28px;
  color: #3b82f6;
  font-size: 50px;
  font-weight: 500;
  line-height: 60px;
}
.card--map .card__title { padding-left: 0; }
.card__icon { display: flex; justify-content: center; width: 64px; }

/* status icons */
.statuses {
  display: flex;
  flex-direction: column;
  align-items: center;
  gap: 58px;
  margin-top: 60px;
}
.statuses__row { display: grid; }
.statuses__row--three { grid-template-columns: repeat(3, 1fr); width: 67%; }
.statuses__row--five { grid-template-columns: repeat(5, 1fr); width: 88%; letter-spacing: 2px; }
.status { display: flex; flex-direction: column; align-items: center; gap: 10px; color: green; }
.status__icon { display: flex; align-items: center; height: 44px; }
.status__label { color: #1c222b; font-size: 22px; line-height: 32px; white-space: nowrap; }

/* fault flags */
.faults { display: grid; margin: 62px auto 0; }
.faults--seven { grid-template-columns: repeat(7, 1fr); width: 91%; }
.faults--three { grid-template-columns: repeat(3, 1fr); width: 81%; }
.fault { display: flex; flex-direction: column; align-items: center; gap: 13px; }
.fault__key {
  width: 44px;
  border-radius: 6px;
  background: green;
  color: #fff;
  font: 900 33px/44px Lato, sans-serif;
  text-align: center;
}
.fault__key--bad { background: red; }
.fault__key--serif { font: 700 33px/44px "DejaVu Sans Mono", monospace; }

/* slanted buttons */
.tab {
  flex: 1;
  height: 23px;
  background: #888;
  clip-path: polygon(4px 0, 100% 0, calc(100% - 4px) 100%, 0 100%);
  font-size: 13px;
  font-weight: 700;
  line-height: 23px;
  text-shadow: 0 1px 1px rgba(0, 0, 0, .5);
}
.tab + .tab { margin-left: -4px; }
.tab--on { background: #87db95; }
.tab--lg {
  flex: none;
  width: 63px;
  height: 29px;
  margin-right: 9px;
  font-size: 15px;
  line-height: 29px;
}

/* metrics */
.metric { display: flex; margin: 75px 61px 0; }
.metric--loose { margin-top: 83px; }
.metric--tight { margin-top: 69px; }
.statuses + .metric--first { margin-top: 70px; }
.faults + .metric--first { margin-top: 91px; }
.chart + .metric { margin-top: 64px; }
.chart + .metric--low { margin-top: 56px; }
.metric__side { width: 175px; margin-right: 72px; }
.metric__name {
  display: flex;
  align-items: center;
  gap: 21px;
  margin-bottom: 11px;
  color: #434b54;
  font-size: 44px;
  font-weight: 400;
  line-height: 47px;
  white-space: nowrap;
}
.metric__icon { display: flex; justify-content: center; width: 56px; flex: none; }
.metric__icon--ok { color: green; }
.tabs { display: flex; }
.metric__value {
  display: flex;
  align-items: baseline;
  gap: 14px;
  height: 81px;
  white-space: nowrap;
}
.metric__value--text { display: block; font-size: 41px; line-height: 81px; }
.metric--low .metric__value { height: 88px; padding-top: 7px; }
.num { font: 700 94px/81px Roboto, sans-serif; }
.num--md { font-size: 63px; line-height: 98px; }
.num--sm { font-size: 54px; line-height: 54px; }
.unit { font: 500 31px/31px Roboto, "Noto Sans CJK KR", sans-serif; }
.unit--ref { margin-left: 16px; }

/* charts */
.chart { width: calc(100% - 122px); height: auto; margin: 20px 61px 0; }
.chart text { font: 22px "Liberation Sans", sans-serif; fill: #666; }
.grid { fill: none; stroke: rgba(0, 0, 0, .1); stroke-width: 2; }
.ylab { text-anchor: end; }
.xlab { text-anchor: middle; }
.line {
  fill: none;
  stroke: #36a2eb;
  stroke-width: 6;
  stroke-linejoin: round;
  vector-effect: non-scaling-stroke;
}
.line--alt { stroke: #ff9f40; }

/* map */
.map { width: 100%; height: auto; margin-top: 30px; }
.map__text {
  fill: #2f3944;
  font-size: 21px;
  font-weight: 500;
  text-anchor: middle;
  paint-order: stroke;
  stroke: #fff;
  stroke-width: 3px;
}
.map__road { font-size: 19px; stroke: none; }
.map__p { fill: #fff; font: 700 16px Roboto, sans-serif; text-anchor: middle; }
.map__p--sm { font-size: 12px; }
.map__scale { fill: #333; font-size: 19px; }
.map__brand { fill: #000; font: 600 20px "Noto Sans", sans-serif; }
.track {
  fill: none;
  stroke: #30c832;
  stroke-opacity: .88;
  stroke-width: 9;
  stroke-linecap: round;
  stroke-linejoin: round;
  vector-effect: non-scaling-stroke;
}

/* actions */
.actions {
  display: grid;
  grid-template-columns: 1fr 1fr;
  gap: 34px 43px;
  margin: 53px 51px 0;
}
.action {
  display: flex;
  justify-content: center;
  align-items: center;
  gap: 18px;
  height: 85px;
  padding: 5px 0 0 3px;
  border-bottom: 9px solid;
  border-radius: 9px;
  font: 500 31px Roboto, "Noto Sans CJK KR", sans-serif;
}
.action--green { background: #2ecc71; border-color: #15b358; }
.action--blue { background: #55acee; border-color: #3c93d5; }
.action--purple { background: #9b59b6; border-color: #82409d; }
.action--red { background: #e74c3c; border-color: #ce3323; }
```
